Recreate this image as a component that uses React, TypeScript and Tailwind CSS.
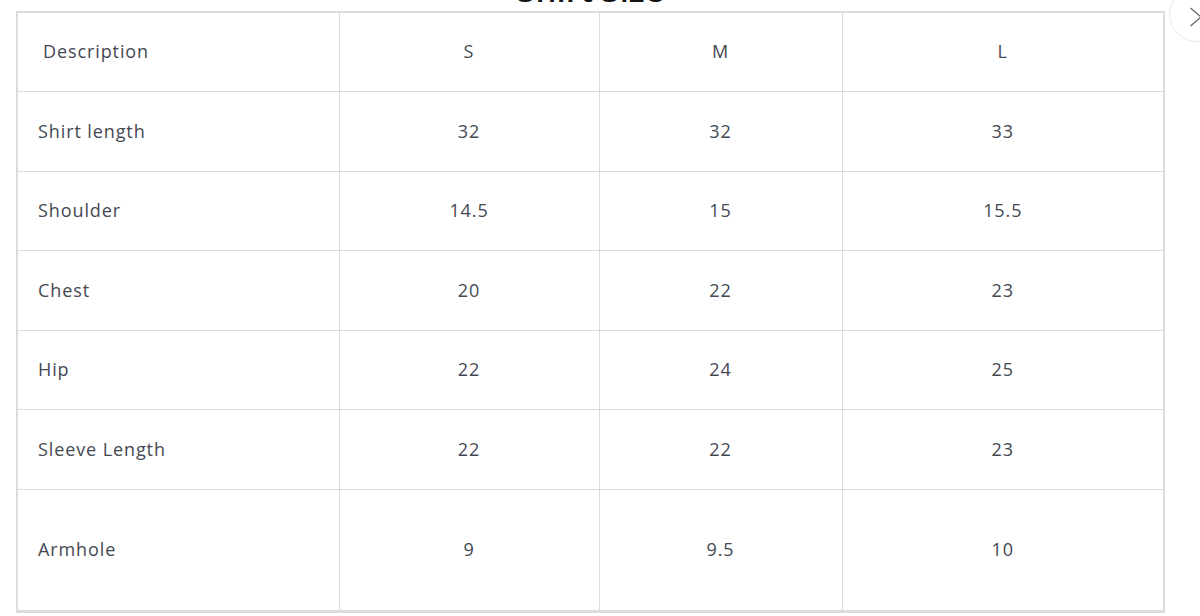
const rows = [
  { label: "Shirt length", s: "32", m: "32", l: "33", h: "h-[80px]" },
  { label: "Shoulder", s: "14.5", m: "15", l: "15.5", h: "h-[79px]" },
  { label: "Chest", s: "20", m: "22", l: "23", h: "h-[80px]" },
  { label: "Hip", s: "22", m: "24", l: "25", h: "h-[79px]" },
  { label: "Sleeve Length", s: "22", m: "22", l: "23", h: "h-[80px]" },
  { label: "Armhole", s: "9", m: "9.5", l: "10", h: "h-[121px]" },
];

export default function App() {
  return (
    <div
      className="relative h-[616px] w-[1200px] overflow-hidden bg-white text-[#434852]"
      style={{ fontFamily: '"Open Sans", "Noto Sans", sans-serif' }}
    >
      <button
        type="button"
        aria-label="Close"
        className="absolute left-[1169px] top-[-14px] flex size-[56px] items-center justify-center rounded-full border border-[#ececec] bg-white text-[#6b6b6b]"
      >
        <svg width="14" height="20" viewBox="0 0 14 20" fill="none" className="ml-[-2px] mt-[6px]">
          <path d="M1.5 1 L12 10 L1.5 19" stroke="currentColor" strokeWidth="1.3" />
        </svg>
      </button>

      <div className="ml-[16px] w-[1149px]">
        <h2 className="mt-[-25px] h-[36px] text-center text-[33px] leading-[30px] font-semibold text-[#121212]">
          Shirt Size
        </h2>

        <div className="border-2 border-[#dcdcdc]">
          <table className="w-full table-fixed border-collapse text-[18px] tracking-[0.9px]">
            <colgroup>
              <col className="w-[321px]" />
              <col className="w-[260px]" />
              <col className="w-[243px]" />
              <col />
            </colgroup>
            <thead>
              <tr className="h-[78px]">
                <th className="border border-t-0 border-l-0 border-[#dcdcdc] pl-[25px] text-left font-normal">Description</th>
                <th className="border border-t-0 border-[#dcdcdc] text-center font-normal">S</th>
                <th className="border border-t-0 border-[#dcdcdc] text-center font-normal">M</th>
                <th className="border border-t-0 border-r-0 border-[#dcdcdc] text-center font-normal">L</th>
              </tr>
            </thead>
            <tbody>
              {rows.map((r) => (
                <tr key={r.label} className={r.h}>
                  <td className="border border-l-0 border-[#dcdcdc] pl-[20px] text-left">{r.label}</td>
                  <td className="border border-[#dcdcdc] text-center">{r.s}</td>
                  <td className="border border-[#dcdcdc] text-center">{r.m}</td>
                  <td className="border border-r-0 border-[#dcdcdc] text-center">{r.l}</td>
                </tr>
              ))}
            </tbody>
          </table>
        </div>
      </div>
    </div>
  );
}
